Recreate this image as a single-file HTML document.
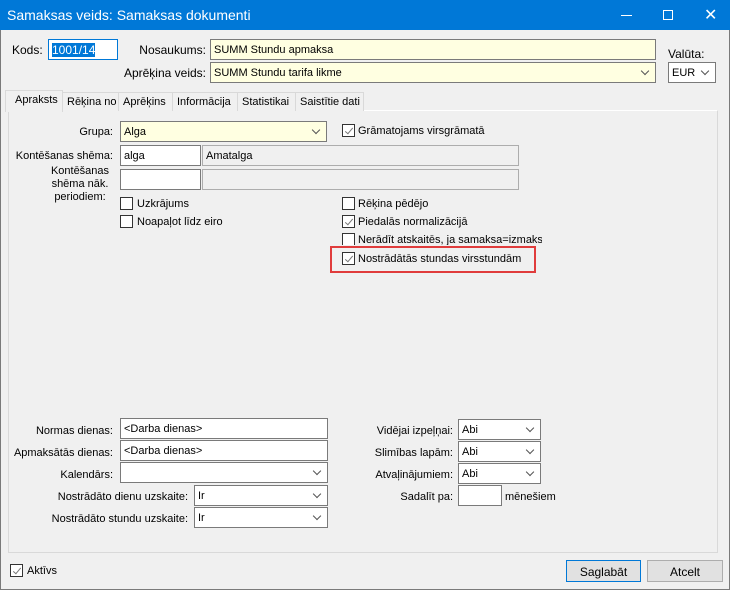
<!DOCTYPE html>
<html><head><meta charset="utf-8"><style>
*{box-sizing:border-box;margin:0;padding:0}
body{width:730px;height:590px;background:#f0f0f0;font-family:"Liberation Sans",sans-serif;font-size:11px;color:#000;position:relative;overflow:hidden}
.a{position:absolute;white-space:nowrap}
.win{position:absolute;left:0;top:0;width:730px;height:590px;border:1px solid #7a7a7a;border-top:none}
.tb{position:absolute;left:0;top:0;width:730px;height:30px;background:#0078d7;color:#fff}
.in{position:absolute;border:1px solid #7a7a7a;background:#fff;height:21px;padding:4px 0 0 3px;white-space:nowrap}
.y{background:#ffffe1}
.g{background:#f0f0f0;border-color:#adadad}
.dd::after{content:"";position:absolute;right:7px;top:5px;width:5px;height:5px;border-right:1px solid #555;border-bottom:1px solid #555;transform:rotate(45deg)}
.cb{position:absolute;width:13px;height:13px;border:1px solid #333;background:#fff}
.ck::after{content:"";position:absolute;left:4px;top:1px;width:3px;height:7px;border-right:1px solid #777;border-bottom:1px solid #777;transform:rotate(40deg)}
.r{text-align:right;margin-top:2px}
.tab{position:absolute;top:92px;height:19px;border:1px solid #d9d9d9;border-bottom:none;background:#f0f0f0;padding:3px 0 0 4px;white-space:nowrap;overflow:hidden}
.btn{position:absolute;top:560px;height:22px;border:1px solid #adadad;background:#e1e1e1;text-align:center;padding-top:4px;font-size:12px}
</style></head><body>
<div class="win"></div>
<div class="tb">
<div class="a" style="left:7px;top:7px;font-size:14px">Samaksas veids: Samaksas dokumenti</div>
<div class="a" style="left:621px;top:15px;width:11px;height:1px;background:#fff"></div>
<div class="a" style="left:663px;top:10px;width:10px;height:10px;border:1px solid #fff"></div>
<div class="a" style="left:704px;top:5px;font-size:16px">✕</div>
</div>
<div class="a" style="left:12px;top:43px;font-size:12px">Kods:</div>
<div class="in" style="left:48px;top:39px;width:70px;border-color:#0078d7;font-size:12px;padding-top:3px"><span style="background:#0078d7;color:#fff">1001/14</span></div>
<div class="a" style="left:110px;top:43px;width:96px;font-size:12px;text-align:right">Nosaukums:</div>
<div class="in y" style="left:210px;top:39px;width:446px">SUMM Stundu apmaksa</div>
<div class="a" style="left:110px;top:66px;width:96px;font-size:12px;text-align:right">Aprēķina veids:</div>
<div class="in y dd" style="left:210px;top:62px;width:446px">SUMM Stundu tarifa likme</div>
<div class="a" style="left:668px;top:47px;font-size:12px">Valūta:</div>
<div class="in dd" style="left:668px;top:62px;width:48px">EUR</div>

<div class="a" style="left:8px;top:110px;width:710px;height:443px;border:1px solid #d9d9d9;border-top-color:#fff;background:#f0f0f0"></div>
<div class="tab" style="left:62px;width:57px">Rēķina no</div>
<div class="tab" style="left:118px;width:55px">Aprēķins</div>
<div class="tab" style="left:172px;width:66px">Informācija</div>
<div class="tab" style="left:237px;width:59px">Statistikai</div>
<div class="tab" style="left:295px;width:69px">Saistītie dati</div>
<div class="tab" style="left:5px;top:90px;height:22px;width:58px;padding-left:9px">Apraksts</div>

<div class="a r" style="left:13px;top:124px;width:100px">Grupa:</div>
<div class="in y dd" style="left:120px;top:121px;width:207px">Alga</div>
<div class="cb ck" style="left:342px;top:124px"></div>
<div class="a" style="left:358px;top:125px">Grāmatojams virsgrāmatā</div>
<div class="a r" style="left:8px;top:148px;width:105px">Kontēšanas shēma:</div>
<div class="in" style="left:120px;top:145px;width:81px">alga</div>
<div class="in g" style="left:202px;top:145px;width:317px">Amatalga</div>
<div class="a" style="left:30px;top:165px;width:100px;text-align:center;line-height:13px;white-space:normal">Kontēšanas<br>shēma nāk.<br>periodiem:</div>
<div class="in" style="left:120px;top:169px;width:81px"></div>
<div class="in g" style="left:202px;top:169px;width:317px"></div>
<div class="cb" style="left:120px;top:197px"></div><div class="a" style="left:137px;top:198px">Uzkrājums</div>
<div class="cb" style="left:120px;top:215px"></div><div class="a" style="left:137px;top:216px">Noapaļot līdz eiro</div>
<div class="cb" style="left:342px;top:197px"></div><div class="a" style="left:358px;top:198px">Rēķina pēdējo</div>
<div class="cb ck" style="left:342px;top:215px"></div><div class="a" style="left:358px;top:216px">Piedalās normalizācijā</div>
<div class="a" style="left:342px;top:233px;width:200px;height:12px;overflow:hidden"><div class="cb" style="left:0;top:0"></div><div class="a" style="left:16px;top:1px">Nerādīt atskaitēs, ja samaksa=izmaksa</div></div>
<div class="a" style="left:330px;top:246px;width:206px;height:27px;border:2px solid #e03c3c"></div>
<div class="cb ck" style="left:342px;top:252px"></div><div class="a" style="left:358px;top:253px">Nostrādātās stundas virsstundām</div>

<div class="a r" style="left:13px;top:423px;width:100px">Normas dienas:</div>
<div class="in" style="left:120px;top:418px;width:208px">&lt;Darba dienas&gt;</div>
<div class="a r" style="left:3px;top:445px;width:110px">Apmaksātās dienas:</div>
<div class="in" style="left:120px;top:440px;width:208px">&lt;Darba dienas&gt;</div>
<div class="a r" style="left:13px;top:467px;width:100px">Kalendārs:</div>
<div class="in dd" style="left:120px;top:462px;width:208px"></div>
<div class="a r" style="left:13px;top:489px;width:175px">Nostrādāto dienu uzskaite:</div>
<div class="in dd" style="left:194px;top:485px;width:134px">Ir</div>
<div class="a r" style="left:13px;top:511px;width:175px">Nostrādāto stundu uzskaite:</div>
<div class="in dd" style="left:194px;top:507px;width:134px">Ir</div>
<div class="a r" style="left:330px;top:423px;width:123px">Vidējai izpeļņai:</div>
<div class="in dd" style="left:458px;top:419px;width:83px">Abi</div>
<div class="a r" style="left:330px;top:445px;width:123px">Slimības lapām:</div>
<div class="in dd" style="left:458px;top:441px;width:83px">Abi</div>
<div class="a r" style="left:330px;top:467px;width:123px">Atvaļinājumiem:</div>
<div class="in dd" style="left:458px;top:463px;width:83px">Abi</div>
<div class="a r" style="left:330px;top:489px;width:123px">Sadalīt pa:</div>
<div class="in" style="left:458px;top:485px;width:44px"></div>
<div class="a" style="left:505px;top:491px">mēnešiem</div>

<div class="cb ck" style="left:10px;top:564px"></div><div class="a" style="left:27px;top:565px">Aktīvs</div>
<div class="btn" style="left:566px;width:75px;border-color:#0078d7">Saglabāt</div>
<div class="btn" style="left:647px;width:76px">Atcelt</div>
</body></html>
